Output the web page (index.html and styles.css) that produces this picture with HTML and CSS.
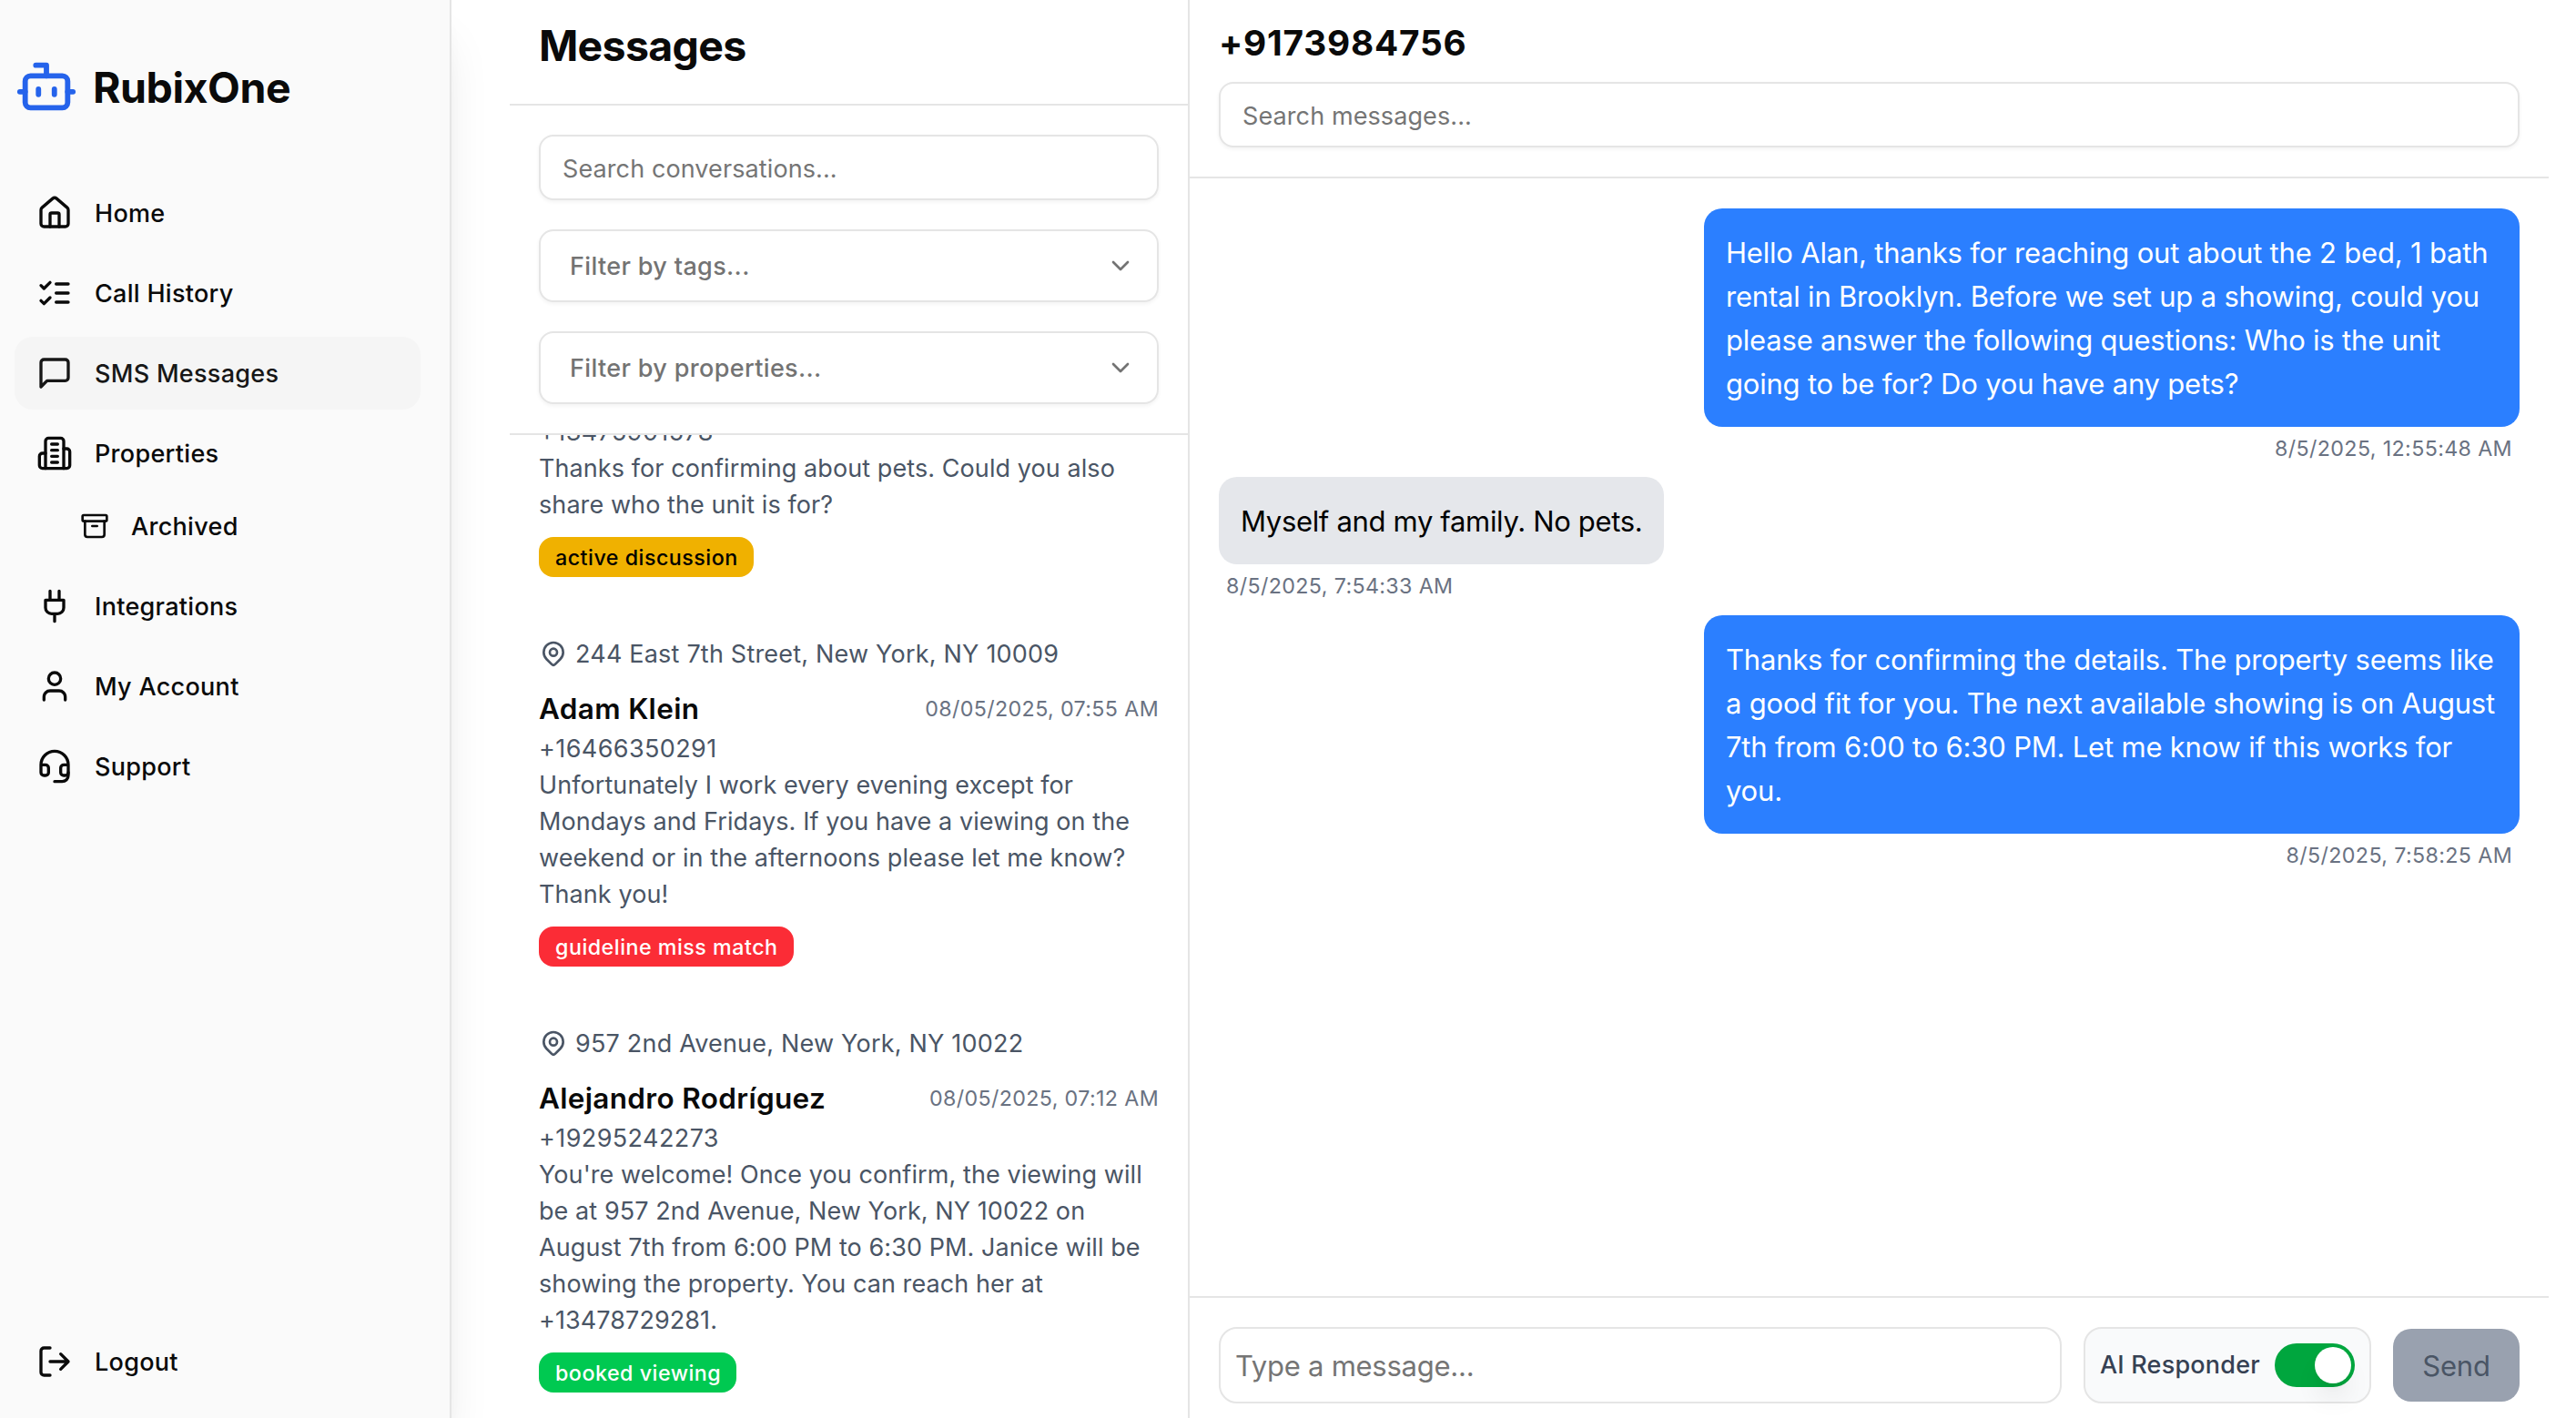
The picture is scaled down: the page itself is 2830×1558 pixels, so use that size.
FILE: index.html
```
<!DOCTYPE html>
<html lang="en">
<head>
<meta charset="utf-8">
<title>RubixOne - Messages</title>
<link rel="stylesheet" href="styles.css">
</head>
<body>
<div class="app">

	<aside class="sidebar">
		<div class="logo">
			<svg class="icon logo-icon" viewBox="0 0 24 24"><path d="M12 8V4H8"/><rect x="4" y="8" width="16" height="12" rx="2"/><path d="M2 14h2M20 14h2M15 13v2M9 13v2"/></svg>
			<span class="logo-text">RubixOne</span>
		</div>
		<nav class="nav">
			<a class="nav-item">
				<svg class="icon" viewBox="0 0 24 24"><path d="M15 21v-8a1 1 0 0 0-1-1h-4a1 1 0 0 0-1 1v8"/><path d="M3 10a2 2 0 0 1 .709-1.528l7-5.999a2 2 0 0 1 2.582 0l7 5.999A2 2 0 0 1 21 10v9a2 2 0 0 1-2 2H5a2 2 0 0 1-2-2z"/></svg>
				<span>Home</span>
			</a>
			<a class="nav-item">
				<svg class="icon" viewBox="0 0 24 24"><path d="m3 17 2 2 4-4M3 7l2 2 4-4M13 6h8M13 12h8M13 18h8"/></svg>
				<span>Call History</span>
			</a>
			<a class="nav-item active">
				<svg class="icon" viewBox="0 0 24 24"><path d="M21 15a2 2 0 0 1-2 2H7l-4 4V5a2 2 0 0 1 2-2h14a2 2 0 0 1 2 2z"/></svg>
				<span>SMS Messages</span>
			</a>
			<div class="nav-group">
				<a class="nav-item">
					<svg class="icon" viewBox="0 0 24 24"><path d="M6 22V4a2 2 0 0 1 2-2h8a2 2 0 0 1 2 2v18Z"/><path d="M6 12H4a2 2 0 0 0-2 2v6a2 2 0 0 0 2 2h2M18 9h2a2 2 0 0 1 2 2v9a2 2 0 0 1-2 2h-2M10 6h4M10 10h4M10 14h4M10 18h4"/></svg>
					<span>Properties</span>
				</a>
				<a class="nav-item sub">
					<svg class="icon" viewBox="0 0 24 24"><rect x="2" y="3" width="20" height="5" rx="1"/><path d="M4 8v11a2 2 0 0 0 2 2h12a2 2 0 0 0 2-2V8M10 12h4"/></svg>
					<span>Archived</span>
				</a>
			</div>
			<a class="nav-item">
				<svg class="icon" viewBox="0 0 24 24"><path d="M12 22v-5M9 8V2M15 8V2M18 8v5a4 4 0 0 1-4 4h-4a4 4 0 0 1-4-4V8Z"/></svg>
				<span>Integrations</span>
			</a>
			<a class="nav-item">
				<svg class="icon" viewBox="0 0 24 24"><path d="M19 21v-2a4 4 0 0 0-4-4H9a4 4 0 0 0-4 4v2"/><circle cx="12" cy="7" r="4"/></svg>
				<span>My Account</span>
			</a>
			<a class="nav-item">
				<svg class="icon" viewBox="0 0 24 24"><path d="M3 11h3a2 2 0 0 1 2 2v3a2 2 0 0 1-2 2H5a2 2 0 0 1-2-2v-5Zm0 0a9 9 0 1 1 18 0m0 0v5a2 2 0 0 1-2 2h-1a2 2 0 0 1-2-2v-3a2 2 0 0 1 2-2h3Z"/><path d="M21 16v2a4 4 0 0 1-4 4h-5"/></svg>
				<span>Support</span>
			</a>
		</nav>
		<a class="nav-item logout">
			<svg class="icon" viewBox="0 0 24 24"><path d="M9 21H5a2 2 0 0 1-2-2V5a2 2 0 0 1 2-2h4M16 17l5-5-5-5M21 12H9"/></svg>
			<span>Logout</span>
		</a>
	</aside>

	<main class="content">
		<section class="conversations">
			<header class="list-header"><h1>Messages</h1></header>
			<div class="filters">
				<input class="search" type="text" placeholder="Search conversations...">
				<button class="select">
					<span>Filter by tags...</span>
					<svg class="icon chevron" viewBox="0 0 24 24"><path d="m6 9 6 6 6-6"/></svg>
				</button>
				<button class="select">
					<span>Filter by properties...</span>
					<svg class="icon chevron" viewBox="0 0 24 24"><path d="m6 9 6 6 6-6"/></svg>
				</button>
			</div>
			<div class="list">
				<article class="conversation scrolled">
					<p class="line phone">+13475901578</p>
					<p class="line">Thanks for confirming about pets. Could you also share who the unit is for?</p>
					<span class="badge yellow">active discussion</span>
				</article>
				<article class="conversation">
					<p class="address">
						<svg class="icon pin" viewBox="0 0 24 24"><circle cx="12" cy="11" r="3"/><path d="M17.657 16.657l-4.243 4.243a2 2 0 0 1-2.827 0l-4.244-4.243a8 8 0 1 1 11.314 0z"/></svg>
						<span>244 East 7th Street, New York, NY 10009</span>
					</p>
					<div class="who">
						<h2>Adam Klein</h2>
						<span class="date">08/05/2025, 07:55 AM</span>
					</div>
					<p class="line phone">+16466350291</p>
					<p class="line">Unfortunately I work every evening except for Mondays and Fridays. If you have a viewing on the weekend or in the afternoons please let me know? Thank you!</p>
					<span class="badge red">guideline miss match</span>
				</article>
				<article class="conversation">
					<p class="address">
						<svg class="icon pin" viewBox="0 0 24 24"><circle cx="12" cy="11" r="3"/><path d="M17.657 16.657l-4.243 4.243a2 2 0 0 1-2.827 0l-4.244-4.243a8 8 0 1 1 11.314 0z"/></svg>
						<span>957 2nd Avenue, New York, NY 10022</span>
					</p>
					<div class="who">
						<h2>Alejandro Rodríguez</h2>
						<span class="date">08/05/2025, 07:12 AM</span>
					</div>
					<p class="line phone">+19295242273</p>
					<p class="line">You're welcome! Once you confirm, the viewing will be at 957 2nd Avenue, New York, NY 10022 on August 7th from 6:00 PM to 6:30 PM. Janice will be showing the property. You can reach her at +13478729281.</p>
					<span class="badge green">booked viewing</span>
				</article>
			</div>
		</section>

		<section class="chat">
			<header class="chat-header">
				<h2>+9173984756</h2>
				<input class="search" type="text" placeholder="Search messages...">
			</header>
			<div class="messages">
				<div class="message sent">
					<p class="bubble">Hello Alan, thanks for reaching out about the 2 bed, 1 bath rental in Brooklyn. Before we set up a showing, could you please answer the following questions: Who is the unit going to be for? Do you have any pets?</p>
					<span class="time">8/5/2025, 12:55:48 AM</span>
				</div>
				<div class="message received">
					<p class="bubble">Myself and my family. No pets.</p>
					<span class="time">8/5/2025, 7:54:33 AM</span>
				</div>
				<div class="message sent">
					<p class="bubble">Thanks for confirming the details. The property seems like a good fit for you. The next available showing is on August 7th from 6:00 to 6:30 PM. Let me know if this works for you.</p>
					<span class="time">8/5/2025, 7:58:25 AM</span>
				</div>
			</div>
			<footer class="composer">
				<input class="compose-input" type="text" placeholder="Type a message...">
				<div class="responder">
					<span>AI Responder</span>
					<span class="toggle"><span class="knob"></span></span>
				</div>
				<button class="send">Send</button>
			</footer>
		</section>
	</main>

</div>
</body>
</html>
```
FILE: styles.css
```
* {
	box-sizing: border-box;
	margin: 0;
	padding: 0;
}
body {
	font-family: Inter, "Liberation Sans", sans-serif;
	font-size: 27px;
	line-height: 40px;
	color: #0a0a0a;
	background: #fff;
	overflow: hidden;
}
input,
button {
	font-family: inherit;
	outline: none;
}
.icon {
	width: 40px;
	height: 40px;
	flex-shrink: 0;
	fill: none;
	stroke: currentColor;
	stroke-width: 2;
	stroke-linecap: round;
	stroke-linejoin: round;
}
.app {
	display: flex;
	height: 1558px;
}

/* sidebar */
.sidebar {
	display: flex;
	flex-direction: column;
	width: 496px;
	flex-shrink: 0;
	padding: 60px 32px 22px 16px;
	background: #fafafa;
	border-right: 2px solid #e5e5e5;
	box-shadow: 0 40px 50px -10px rgba(0, 0, 0, 0.1), 0 16px 20px -12px rgba(0, 0, 0, 0.1);
}
.logo {
	display: flex;
	align-items: center;
	gap: 16px;
	height: 70px;
}
.logo-icon {
	width: 70px;
	height: 70px;
	color: #2563eb;
}
.logo-text {
	padding-top: 1px;
	font-size: 46.5px;
	font-weight: 700;
	letter-spacing: -0.45px;
}
.nav {
	display: flex;
	flex-direction: column;
	gap: 8px;
	margin-top: 64px;
}
.nav-item {
	display: flex;
	align-items: center;
	gap: 24px;
	height: 80px;
	padding: 0 24px;
	border-radius: 20px;
	font-weight: 500;
	letter-spacing: 0.3px;
}
.nav-item span {
	padding-top: 2px;
}
.nav-item.active {
	color: #171717;
	background: #f5f5f5;
}
.nav-group {
	padding-bottom: 4px;
}
.nav-item.sub {
	height: 72px;
	margin-top: 4px;
	margin-left: 48px;
}
.sub .icon {
	width: 32px;
	height: 32px;
}
.logout {
	margin-top: auto;
}

.content {
	display: flex;
	width: 2240px;
	margin-left: 64px;
}

/* inputs shared by both columns */
.search {
	display: block;
	width: 100%;
	height: 72px;
	padding: 2px 24px 0;
	border: 2px solid #e5e5e5;
	border-radius: 16px;
	box-shadow: 0 2px 4px rgba(0, 0, 0, 0.05);
	font-size: 27px;
	letter-spacing: 0.1px;
	background: #fff;
}
input::placeholder {
	color: #757575;
}

/* conversation list */
.conversations {
	display: flex;
	flex-direction: column;
	width: 747px;
	flex-shrink: 0;
	border-right: 2px solid #e5e5e5;
}
.list-header {
	height: 116px;
	padding: 18px 32px 0;
	border-bottom: 2px solid #e5e5e5;
}
h1 {
	font-size: 46.5px;
	line-height: 64px;
	font-weight: 700;
	letter-spacing: -0.7px;
}
.filters {
	display: flex;
	flex-direction: column;
	gap: 32px;
	padding: 32px;
	border-bottom: 2px solid #e5e5e5;
}
.select {
	display: flex;
	align-items: center;
	justify-content: space-between;
	height: 80px;
	padding: 0 24px 0 32px;
	border: 2px solid #e5e5e5;
	border-radius: 16px;
	box-shadow: 0 2px 4px rgba(0, 0, 0, 0.05);
	font-size: 27px;
	font-weight: 500;
	letter-spacing: 0.35px;
	color: #737373;
	background: #fff;
}
.chevron {
	width: 32px;
	height: 32px;
}
.list {
	flex: 1;
	min-height: 0;
	overflow: hidden;
	padding: 0 32px;
}
.conversation {
	padding-top: 1px;
	margin-bottom: 64px;
	color: #4a5565;
	letter-spacing: 0.08px;
}
.conversation.scrolled {
	margin-top: -24px;
}
.phone {
	letter-spacing: 0.4px;
}
.address {
	display: flex;
	align-items: center;
	gap: 8px;
	margin-bottom: 16px;
	letter-spacing: 0.2px;
}
.pin {
	width: 32px;
	height: 32px;
	margin-bottom: 2px;
}
.who {
	display: flex;
	align-items: center;
	justify-content: space-between;
	height: 48px;
}
h2 {
	font-size: 31.5px;
	font-weight: 600;
	letter-spacing: 0.33px;
	color: #0a0a0a;
}
.date,
.time {
	font-size: 23.25px;
	line-height: 32px;
	letter-spacing: 0.36px;
	color: #6a7282;
}
.badge {
	display: block;
	width: fit-content;
	height: 44px;
	margin-top: 15px;
	padding: 1px 17px 0 18px;
	border-radius: 16px;
	font-size: 23.25px;
	line-height: 44px;
	font-weight: 500;
	letter-spacing: 0.5px;
	color: #fff;
}
.badge.yellow {
	color: #000;
	background: #f0b100;
}
.badge.red {
	background: #fb2c36;
}
.badge.green {
	background: #00c951;
}

/* chat */
.chat {
	display: flex;
	flex-direction: column;
	flex: 1;
	min-width: 0;
}
.chat-header {
	padding: 18px 32px 32px;
	border-bottom: 2px solid #e5e5e5;
}
.chat-header h2 {
	margin-bottom: 14px;
	font-size: 38.75px;
	line-height: 58px;
	font-weight: 700;
	letter-spacing: 0.8px;
}
.messages {
	display: flex;
	flex-direction: column;
	flex: 1;
	gap: 16px;
	padding: 33px 32px 0;
}
.message {
	display: flex;
	flex-direction: column;
	align-items: flex-start;
}
.message:first-child {
	margin-bottom: -1px;
}
.message.sent {
	align-items: flex-end;
}
.bubble {
	max-width: 896px;
	padding: 25px 24px 23px;
	border-radius: 20px;
	font-size: 31px;
	line-height: 48px;
	letter-spacing: -0.2px;
}
.sent .bubble {
	color: #fff;
	background: #2b7fff;
}
.received .bubble {
	color: #000;
	background: #e5e7eb;
	letter-spacing: -0.33px;
}
.time {
	margin-top: 8px;
	padding: 0 8px;
}
.composer {
	display: flex;
	align-items: center;
	gap: 24px;
	padding: 32px 32px 16px;
	border-top: 2px solid #e5e5e5;
}
.compose-input {
	flex: 1;
	height: 84px;
	padding: 0 16px;
	border: 2px solid #e5e5e5;
	border-radius: 20px;
	font-size: 31px;
	letter-spacing: -0.25px;
}
.responder {
	display: flex;
	align-items: center;
	gap: 16px;
	width: 316px;
	height: 84px;
	padding-left: 16px;
	border: 2px solid #e5e5e5;
	border-radius: 20px;
	font-weight: 500;
	letter-spacing: 0.2px;
	color: #364153;
	background: #f9fafb;
}
.toggle {
	display: flex;
	align-items: center;
	justify-content: flex-end;
	width: 88px;
	height: 48px;
	padding: 4px;
	border-radius: 24px;
	background: #00a63e;
}
.knob {
	width: 40px;
	height: 40px;
	border-radius: 50%;
	background: #fff;
	box-shadow: 0 20px 30px -6px rgba(0, 0, 0, 0.1), 0 8px 12px -8px rgba(0, 0, 0, 0.1);
}
.send {
	width: 139px;
	height: 80px;
	border: none;
	border-radius: 20px;
	font-size: 31px;
	letter-spacing: -0.2px;
	color: #4a5565;
	background: #99a1af;
}
```
